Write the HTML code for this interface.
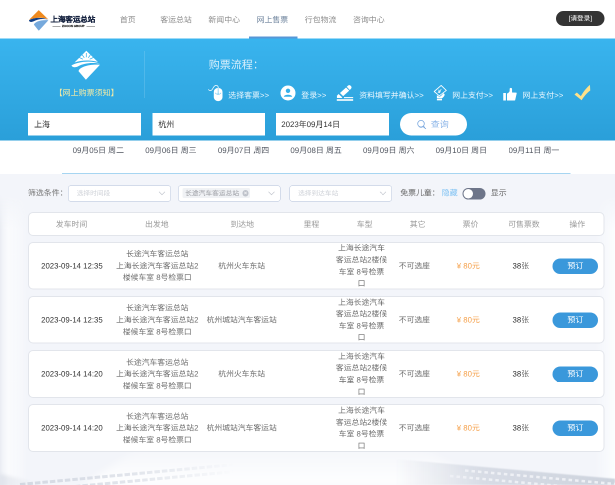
<!DOCTYPE html>
<html lang="zh-CN">
<head>
<meta charset="utf-8">
<title>上海客运总站</title>
<style>
*{box-sizing:border-box;margin:0;padding:0}
html,body{width:615px;height:485px;overflow:hidden;background:#f3f5fa}
body{font-family:"Liberation Sans",sans-serif;color:#666}
#stage{position:absolute;left:0;top:0;width:1230px;height:970px;transform:scale(.5);transform-origin:0 0;will-change:transform;overflow:hidden;font-size:16px;background:#f3f5fa}
.abs{position:absolute}
.t{position:absolute;white-space:nowrap;line-height:24px;height:24px}
.c{transform:translateX(-50%)}
/* nav */
#nav{position:absolute;left:0;top:0;width:1230px;height:77px;background:#fff}
.ni{position:absolute;top:28.8px;width:96.4px;text-align:center;line-height:24px;color:#8c8c8c;font-size:15.8px}
/* blue */
#blue{position:absolute;left:0;top:77px;width:1230px;height:204px;background:linear-gradient(180deg,#39b4ee 0%,#2a9fd9 100%)}
.st{position:absolute;top:103px;line-height:24px;color:#e9f6fd;font-size:15.8px;white-space:nowrap}
.inp{position:absolute;top:149.2px;height:44.8px;width:225.6px;background:#fff;color:#333;font-size:15.8px;line-height:48.4px;padding-left:12px;white-space:nowrap}
/* date row */
#dates{position:absolute;left:0;top:281px;width:1230px;height:67px;background:#fff}
.dt{position:absolute;top:9.2px;width:145.2px;text-align:center;line-height:24px;color:#50555f;font-size:15.8px;white-space:nowrap}
/* filter */
.sel{position:absolute;top:370.6px;height:32.2px;width:205.2px;background:#fff;border:1.4px solid #b3c1da;border-radius:5px}
.ph{position:absolute;left:16px;top:3px;line-height:24px;font-size:13.4px;color:#cfd2d8;white-space:nowrap}
.chev{position:absolute;right:10px;top:10px;width:14px;height:9px}
/* table */
.box{position:absolute;left:56.2px;width:1153.2px;background:#fff;border:2px solid #e2e5eb;border-radius:10px}
.hd{position:absolute;top:0.9px;line-height:45px;color:#9a9a9a;font-size:15.8px;white-space:nowrap;transform:translateX(-50%)}
.row{height:95.6px}
.cell{position:absolute;top:-0.8px;height:95.6px;display:flex;align-items:center;justify-content:center;text-align:center;line-height:23.6px;font-size:15.6px;color:#6e6e6e;white-space:nowrap;transform:translateX(-50%)}
.btn{position:absolute;left:1047.2px;top:31px;width:91px;height:31.2px;border-radius:16px;background:#3a98db;color:#fff;font-size:16px;line-height:31px;text-align:center}
#stage{text-rendering:geometricPrecision}</style>
</head>
<body>
<div id="stage">

<!-- background decoration -->
<div class="abs" id="bgdeco" style="left:0;top:348px;width:1230px;height:622px;background:
linear-gradient(90deg,rgba(232,235,241,.9) 0,rgba(242,244,248,.9) 6px,rgba(250,251,253,.9) 16px,rgba(250,251,253,.6) 36px,rgba(243,245,250,0) 56px),
linear-gradient(270deg,rgba(252,253,254,.9) 0,rgba(243,245,250,0) 40px);-webkit-mask-image:linear-gradient(180deg,transparent 0,transparent 40px,#000 110px);mask-image:linear-gradient(180deg,transparent 0,transparent 40px,#000 110px)"></div>
<svg class="abs" style="left:0;top:860px" width="1230" height="110" viewBox="0 860 1230 110">
 <defs>
  <linearGradient id="gl" x1="0" x2="470" y1="0" y2="0" gradientUnits="userSpaceOnUse"><stop offset="0" stop-color="#c8ced9" stop-opacity=".75"/><stop offset=".55" stop-color="#cbd1dc" stop-opacity=".55"/><stop offset="1" stop-color="#c6cdd9" stop-opacity="0"/></linearGradient>
  <linearGradient id="gr" x1="790" x2="1230" y1="0" y2="0" gradientUnits="userSpaceOnUse"><stop offset="0" stop-color="#d2d7e1" stop-opacity="0"/><stop offset=".4" stop-color="#d2d7e1" stop-opacity=".85"/><stop offset="1" stop-color="#cdd3dd"/></linearGradient>
  <linearGradient id="gw" x1="0" x2="0" y1="880" y2="970" gradientUnits="userSpaceOnUse"><stop offset="0" stop-color="#fff" stop-opacity="0"/><stop offset="1" stop-color="#fff" stop-opacity=".9"/></linearGradient>
  <linearGradient id="gc" x1="0" x2="70" y1="0" y2="0" gradientUnits="userSpaceOnUse"><stop offset="0" stop-color="#cfd4de" stop-opacity=".5"/><stop offset="1" stop-color="#cfd4de" stop-opacity="0"/></linearGradient>
 </defs>
 <polygon points="300,880 820,880 980,975 160,975" fill="url(#gw)" style="filter:blur(8px)"/>
 <polygon points="0,948 60,962 60,975 0,975" fill="url(#gc)" style="filter:blur(3px)"/>
 <polygon points="790,918 1230,957.5 1230,970 790,970" fill="url(#gr)" style="filter:blur(1px)"/>
 <line x1="930" y1="941" x2="1230" y2="968" stroke="#eef0f5" stroke-width="5" stroke-dasharray="7 6"/>
 <line x1="900" y1="952" x2="1230" y2="982" stroke="#eef0f5" stroke-width="5" stroke-dasharray="7 6"/>
 <line x1="40" y1="969" x2="470" y2="929" stroke="url(#gl)" stroke-width="6" stroke-dasharray="11 4"/>
 <line x1="150" y1="973" x2="470" y2="943" stroke="url(#gl)" stroke-width="6" stroke-dasharray="11 4"/>
</svg>

<!-- NAV -->
<div id="nav">
  <svg class="abs" style="left:57.8px;top:19.8px" width="39.6" height="41.6" viewBox="0 0 39.6 41.6">
    <defs><radialGradient id="sun" cx="50%" cy="100%" r="60%"><stop offset="0" stop-color="#fff" stop-opacity=".95"/><stop offset="1" stop-color="#fff" stop-opacity="0"/></radialGradient></defs>
    <path d="M19.5,0.3 L38.8,19 C30,14.6 16,14 0.2,19.6 Z" fill="#ef8a1e"/>
    <ellipse cx="19.6" cy="15.4" rx="6" ry="4.4" fill="url(#sun)"/>
    <path d="M38.8,20.4 L19.5,41.6 L9.7,29.2 C11.5,24 22,19 38.8,20.4 Z" fill="#76a9dc"/>
    <path d="M-0.2,20.6 C8,15.5 24,13.5 38.8,19.2 C28,16.8 18,17.5 9,22.8 C5,24.5 0.5,24.5 -0.2,20.6 Z" fill="#123f86"/>
  </svg>
  <div class="t" style="left:101px;top:27.7px;font-family:'Liberation Serif',serif;font-weight:bold;font-size:15px;color:#15223f;letter-spacing:-.1px;-webkit-text-stroke:.35px #15223f">上海客运总站</div>
  <div class="abs" style="left:104.6px;top:52px;width:16px;height:1px;background:#555"></div>
  <div class="abs" style="left:172.8px;top:52px;width:17px;height:1px;background:#555"></div>
  <div class="t c" style="left:146.6px;top:40.6px;font-size:5.8px;font-weight:bold;color:#111;letter-spacing:.1px;-webkit-text-stroke:.3px #111">ZOOON GROUP</div>

  <div class="ni" style="left:207.4px">首页</div>
  <div class="ni" style="left:303.8px">客运总站</div>
  <div class="ni" style="left:400.2px">新闻中心</div>
  <div class="ni" style="left:496.6px;color:#71869f">网上售票</div>
  <div class="ni" style="left:593px">行包物流</div>
  <div class="ni" style="left:689.4px">咨询中心</div>
  <div class="abs" style="left:498.4px;top:72.6px;width:96.4px;height:4.4px;background:#5697d7"></div>

  <div class="abs" style="left:1112px;top:21.8px;width:97.4px;height:29.8px;border-radius:15px;background:#343434;color:#fff;font-size:13.2px;line-height:29.4px;text-align:center">[请登录]</div>
</div>

<!-- BLUE -->
<div id="blue">
  <!-- white logo -->
  <svg class="abs" style="left:142.8px;top:24px" width="57.2" height="58.6" viewBox="0 0 57.2 58.6">
    <path d="M29.6,0.4 L53,23.2 C42,19.2 20,18.6 6,24 Z" fill="#fff"/>
    <g stroke="#36b1eb" stroke-width="1.5">
      <line x1="29.6" y1="13.5" x2="29.6" y2="5"/>
      <line x1="25.6" y1="14.6" x2="21.4" y2="8.6"/><line x1="33.6" y1="14.6" x2="37.8" y2="8.6"/>
      <line x1="22.8" y1="17.4" x2="15.6" y2="14"/><line x1="36.4" y1="17.4" x2="43.6" y2="14"/>
    </g>
    <path d="M0,29.8 C12,23 38,18.5 57,26.6 C42,23.4 24,25.4 13,31.8 C8,34.4 1,34 0,29.8 Z" fill="#fff"/>
    <path d="M57,28.4 L28.8,58.4 L14,41.2 C16,33 34,27 57,28.4 Z" fill="#fff"/>
  </svg>
  <div class="t c" style="left:173.2px;top:97.6px;font-size:16px;color:#f1eaa6">【网上购票须知】</div>
  <div class="abs" style="left:288.6px;top:24.6px;width:1.2px;height:94px;background:rgba(255,255,255,.28)"></div>
  <div class="t" style="left:417.4px;top:41px;font-size:22px;color:#d9effb">购票流程：</div>

  <!-- step icons -->
  <svg class="abs" style="left:416px;top:92.6px" width="30" height="33" viewBox="0 0 30 33">
    <path d="M0.6,9 C3,11.5 6.5,12.5 9,8 C11,4 13,0.8 16,0.8 C19,0.8 21,3 20.4,6.4" fill="none" stroke="#fff" stroke-width="1.5"/>
    <rect x="11.6" y="6" width="17.4" height="26.2" rx="8" fill="#fff"/>
    <path d="M20.3,6.4 L20.3,16" stroke="#7fcdf3" stroke-width="1.6"/>
    <path d="M14.4,15.6 Q20.3,22.6 26.2,15.6" fill="none" stroke="#7fcdf3" stroke-width="1.4"/>
    <circle cx="20.3" cy="17.4" r="1.8" fill="#9bd8f6"/>
  </svg>
  <div class="st" style="left:456.6px">选择客票&gt;&gt;</div>

  <svg class="abs" style="left:560px;top:94px" width="32" height="30" viewBox="0 0 32 30">
    <circle cx="16" cy="15" r="15" fill="#fff"/>
    <circle cx="16" cy="10.6" r="4.4" fill="#35b0ea"/>
    <path d="M7.5,22.5 C8.5,17 23.5,17 24.5,22.5 Z" fill="#35b0ea"/>
  </svg>
  <div class="st" style="left:602.6px">登录&gt;&gt;</div>

  <svg class="abs" style="left:673px;top:92.6px" width="35" height="33" viewBox="0 0 35 33">
    <path d="M0.9,26 L0.9,21.5 L4.1,18 L11.6,24.9 L10.3,26 Z" fill="#fff"/>
    <path d="M6.9,15.9 L19.1,4.9 L25.5,11.3 L13.3,22.3 Z" fill="#fff"/>
    <path d="M20.5,3.5 L23,1.2 C25,-0.5 27,0 28.6,1.8 C30.4,3.6 30.6,5.6 29,7.4 L26.6,10 Z" fill="#fff"/>
    <rect x="15" y="24.2" width="18.3" height="2.1" fill="#fff"/>
    <rect x="0.6" y="28.4" width="32.7" height="3.2" fill="#fff"/>
  </svg>
  <div class="st" style="left:718.4px">资料填写并确认&gt;&gt;</div>

  <svg class="abs" style="left:867.2px;top:93px" width="27" height="32" viewBox="0 0 27 32">
    <path d="M15.3,0.8 L25.6,10.9 L11.6,21.6 L1.4,13 Z" fill="none" stroke="#fff" stroke-width="1.7" stroke-linejoin="round"/>
    <path d="M9.4,9.6 L12.8,12.4 L15.6,8 M12.8,12.4 L10.8,16 M9.2,12.6 L14.4,13.6 M8.6,14.6 L13.4,15.6" fill="none" stroke="#fff" stroke-width="1.2"/>
    <path d="M6.8,20.4 L6.8,26.4 L17,26.4 C20,25 22.6,21 22.3,18.6 L19.4,15.9 C18.5,19 15,22.6 11.6,23.4 Z" fill="#fff"/>
    <rect x="6.8" y="27.6" width="10.2" height="3.1" fill="#fff"/>
  </svg>
  <div class="st" style="left:904.4px">网上支付&gt;&gt;</div>

  <svg class="abs" style="left:1006px;top:98.2px" width="28" height="27" viewBox="0 0 28 27">
    <rect x="0.5" y="11" width="5.3" height="15" fill="#fff"/>
    <path d="M8,26 L8,12.6 L13.3,7.8 L13.3,3 C13.3,0 18.1,0 18.1,3 L18.1,10 L26,10.2 C27.3,10.2 27.6,11 27.3,12 L24.4,25 C24.2,25.8 23.6,26 23,26 Z" fill="#fff"/>
  </svg>
  <div class="st" style="left:1045px">网上支付&gt;&gt;</div>

  <svg class="abs" style="left:1148px;top:91.8px" width="34" height="32" viewBox="0 0 34 32">
    <path d="M0.9,19.9 L5.7,16 L13.7,23.3 C20,12.6 26.6,5.1 31.9,0.8 L32.5,12.1 C25.5,17 19,25.5 15.3,31.4 Z" fill="#fde18a"/>
  </svg>

  <div class="inp" style="left:56.2px">上海</div>
  <div class="inp" style="left:304.6px">杭州</div>
  <div class="inp" style="left:552.4px;padding-left:10px">2023年09月14日</div>
  <div class="abs" style="left:799.6px;top:149px;width:134.8px;height:45.2px;border-radius:23px;background:#fff"></div>
  <svg class="abs" style="left:834px;top:161.6px" width="19" height="20" viewBox="0 0 19 20">
    <circle cx="8" cy="8.4" r="6.6" fill="none" stroke="#7ba8de" stroke-width="1.6"/>
    <path d="M12.6,13.4 L17.6,18.6" stroke="#7ba8de" stroke-width="2.2"/>
  </svg>
  <div class="t" style="left:861.6px;top:159.6px;font-size:18px;color:#8db6e8">查询</div>
</div>

<!-- DATES -->
<div id="dates">
  <div class="dt" style="left:124px">09月05日 周二</div>
  <div class="dt" style="left:269.2px">09月06日 周三</div>
  <div class="dt" style="left:414.4px">09月07日 周四</div>
  <div class="dt" style="left:559.6px">09月08日 周五</div>
  <div class="dt" style="left:704.8px">09月09日 周六</div>
  <div class="dt" style="left:850px">09月10日 周日</div>
  <div class="dt" style="left:995.2px">09月11日 周一</div>
  <div class="abs" style="left:124px;top:64.6px;width:1016.8px;height:2.4px;background:#a6d5f1"></div>
</div>

<!-- FILTER -->
<div class="t" style="left:56px;top:375.4px;color:#757575;font-size:15.8px">筛选条件：</div>
<div class="sel" style="left:136.4px"><div class="ph">选择时间段</div>
  <svg class="chev" viewBox="0 0 14 9"><path d="M1,1.5 L7,7.5 L13,1.5" fill="none" stroke="#c3c7cf" stroke-width="1.4"/></svg></div>
<div class="sel" style="left:356.2px">
  <div class="abs" style="left:7.6px;top:4.8px;width:135.4px;height:19.8px;background:#f0f2f5;border-radius:3px"></div>
  <div class="ph" style="left:13px;color:#9b9da3;font-size:13.5px">长途汽车客运总站</div>
  <div class="abs" style="left:127.6px;top:8.6px;width:12.4px;height:12.4px;border-radius:50%;background:#bfc3cb"></div>
  <svg class="abs" style="left:130.8px;top:11.8px" width="6" height="6" viewBox="0 0 6 6"><path d="M0.6,0.6 L5.4,5.4 M5.4,0.6 L0.6,5.4" stroke="#fff" stroke-width="1.1"/></svg>
  <svg class="chev" viewBox="0 0 14 9"><path d="M1,1.5 L7,7.5 L13,1.5" fill="none" stroke="#c3c7cf" stroke-width="1.4"/></svg></div>
<div class="sel" style="left:579.2px;width:204.6px"><div class="ph">选择到达车站</div>
  <svg class="chev" viewBox="0 0 14 9"><path d="M1,1.5 L7,7.5 L13,1.5" fill="none" stroke="#c3c7cf" stroke-width="1.4"/></svg></div>
<div class="t" style="left:800.4px;top:375.4px;color:#666;font-size:15.8px">免票儿童：</div>
<div class="t" style="left:883.6px;top:375.4px;color:#7fc2f3;font-size:15.8px">隐藏</div>
<div class="abs" style="left:924.6px;top:375.8px;width:46.4px;height:23.4px;border-radius:12px;background:#6d7589"></div>
<div class="abs" style="left:927px;top:378px;width:19px;height:19px;border-radius:50%;background:#fff"></div>
<div class="t" style="left:981.6px;top:375.4px;color:#666;font-size:15.8px">显示</div>

<!-- TABLE HEADER -->
<div class="box" style="top:424.3px;height:47.3px">
  <div class="hd" style="left:84.8px">发车时间</div>
  <div class="hd" style="left:255.4px">出发地</div>
  <div class="hd" style="left:426.2px">到达地</div>
  <div class="hd" style="left:564.6px">里程</div>
  <div class="hd" style="left:671.2px">车型</div>
  <div class="hd" style="left:777.0px">其它</div>
  <div class="hd" style="left:882.8px">票价</div>
  <div class="hd" style="left:989.6px">可售票数</div>
  <div class="hd" style="left:1096.4px">操作</div>
</div>

<!-- ROWS -->
<div class="box row" style="top:483.6px">
  <div class="cell" style="left:85.6px;color:#333">2023-09-14 12:35</div>
  <div class="cell" style="left:256.4px">长途汽车客运总站<br>上海长途汽车客运总站2<br>楼候车室 8号检票口</div>
  <div class="cell" style="left:425.2px">杭州火车东站</div>
  <div class="cell" style="left:664.8px">上海长途汽车<br>客运总站2楼候<br>车室 8号检票<br>口</div>
  <div class="cell" style="left:770.6px">不可选座</div>
  <div class="cell" style="left:878.4px;color:#f5a04a">¥ 80元</div>
  <div class="cell" style="left:983.4px"><span style="color:#333">38</span>张</div>
  <div class="btn">预订</div>
</div>
<div class="box row" style="top:591.8px">
  <div class="cell" style="left:85.6px;color:#333">2023-09-14 12:35</div>
  <div class="cell" style="left:256.4px">长途汽车客运总站<br>上海长途汽车客运总站2<br>楼候车室 8号检票口</div>
  <div class="cell" style="left:425.2px">杭州城站汽车客运站</div>
  <div class="cell" style="left:664.8px">上海长途汽车<br>客运总站2楼候<br>车室 8号检票<br>口</div>
  <div class="cell" style="left:770.6px">不可选座</div>
  <div class="cell" style="left:878.4px;color:#f5a04a">¥ 80元</div>
  <div class="cell" style="left:983.4px"><span style="color:#333">38</span>张</div>
  <div class="btn">预订</div>
</div>
<div class="box row" style="top:700px">
  <div class="cell" style="left:85.6px;color:#333">2023-09-14 14:20</div>
  <div class="cell" style="left:256.4px">长途汽车客运总站<br>上海长途汽车客运总站2<br>楼候车室 8号检票口</div>
  <div class="cell" style="left:425.2px">杭州火车东站</div>
  <div class="cell" style="left:664.8px">上海长途汽车<br>客运总站2楼候<br>车室 8号检票<br>口</div>
  <div class="cell" style="left:770.6px">不可选座</div>
  <div class="cell" style="left:878.4px;color:#f5a04a">¥ 80元</div>
  <div class="cell" style="left:983.4px"><span style="color:#333">38</span>张</div>
  <div class="btn">预订</div>
</div>
<div class="box row" style="top:808.2px">
  <div class="cell" style="left:85.6px;color:#333">2023-09-14 14:20</div>
  <div class="cell" style="left:256.4px">长途汽车客运总站<br>上海长途汽车客运总站2<br>楼候车室 8号检票口</div>
  <div class="cell" style="left:425.2px">杭州城站汽车客运站</div>
  <div class="cell" style="left:664.8px">上海长途汽车<br>客运总站2楼候<br>车室 8号检票<br>口</div>
  <div class="cell" style="left:770.6px">不可选座</div>
  <div class="cell" style="left:878.4px;color:#f5a04a">¥ 80元</div>
  <div class="cell" style="left:983.4px"><span style="color:#333">38</span>张</div>
  <div class="btn">预订</div>
</div>

</div>
</body>
</html>
